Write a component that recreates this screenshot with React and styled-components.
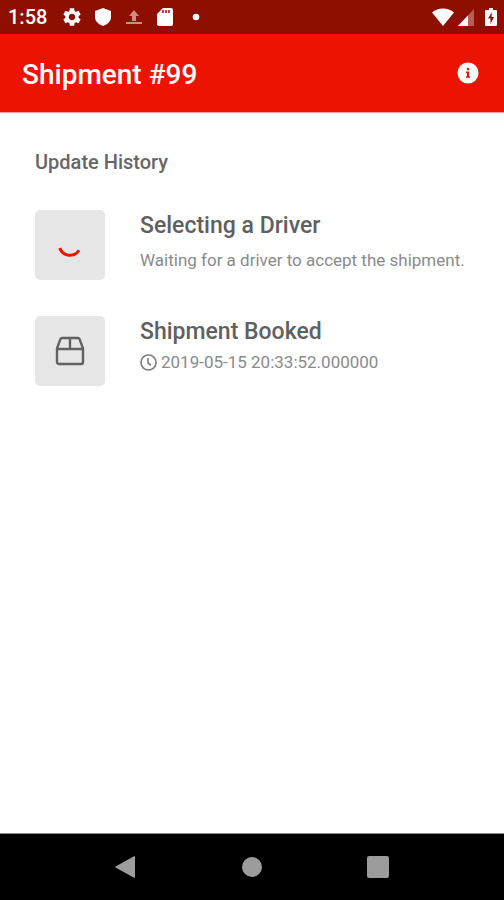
import React from 'react';
import styled, {createGlobalStyle} from 'styled-components';

const GlobalStyle = createGlobalStyle`
  * {
    box-sizing: border-box;
    margin: 0;
    padding: 0;
  }

  body {
    background-color: #fff;
    font-family: Roboto, "Liberation Sans", sans-serif;
  }

  svg {
    display: block;
    flex-shrink: 0;
  }
`;

const Screen = styled.div`
  display: flex;
  flex-direction: column;
  min-height: 100vh;
`;

const StatusBar = styled.div`
  display: flex;
  align-items: center;
  justify-content: space-between;
  height: 34px;
  padding: 0 6px 0 8px;
  background-color: #8e0e00;
  color: #fff;
`;

const Clock = styled.time`
  margin-right: 5px;
  font-size: 20px;
  font-weight: 500;
`;

const StatusGroup = styled.div`
  display: flex;
  align-items: center;
  gap: ${props => props.gap};
`;

const AppBar = styled.header`
  display: flex;
  align-items: center;
  justify-content: space-between;
  height: 79px;
  padding: 0 25px 0 22px;
  border-bottom: 1px solid #f7a79f;
  background-color: #ec1400;
  color: #fff;

  & h1 {
    padding-top: 3px;
    font-size: 28px;
    font-weight: 500;
  }
`;

const InfoButton = styled.button`
  padding: 0;
  border: none;
  background: none;
  color: inherit;
  cursor: pointer;
`;

const Content = styled.main`
  flex: 1;
  padding: 36px 35px;

  & h2 {
    margin-bottom: 34px;
    color: #666;
    font-size: 20px;
    font-weight: 500;
    line-height: 27px;
  }
`;

const History = styled.ul`
  display: flex;
  flex-direction: column;
  gap: 36px;
  list-style: none;
`;

const HistoryItem = styled.li`
  display: flex;
  gap: 35px;

  & h3 {
    color: #606060;
    font-size: 23px;
    font-weight: 500;
    line-height: 32px;
  }
`;

const Tile = styled.div`
  display: flex;
  flex-shrink: 0;
  align-items: center;
  justify-content: center;
  width: 70px;
  height: 70px;
  border-radius: 5px;
  background-color: #e6e6e6;
`;

const Detail = styled.p`
  display: flex;
  align-items: center;
  gap: 4px;
  margin-top: ${props => props.$spaced ? '4px' : '0'};
  color: #8a8a8a;
  font-size: 17px;
  line-height: 28px;
  white-space: nowrap;
`;

const NavBar = styled.nav`
  display: flex;
  justify-content: center;
  height: 67px;
  border-top: 1px solid #8c8c8c;
  background-color: #000;
`;

const NavButton = styled.button`
  display: flex;
  align-items: center;
  justify-content: center;
  width: 25%;
  border: none;
  background: none;
  color: #9c9c9c;
  cursor: pointer;
`;

const GearIcon = () => (
    <svg width="22" height="22" viewBox="0 0 24 24" fill="currentColor">
        <path d="M19.14 12.94c.04-.3.06-.61.06-.94 0-.32-.02-.64-.07-.94l2.03-1.58c.18-.14.23-.41.12-.61l-1.92-3.32c-.12-.22-.37-.29-.59-.22l-2.39.96c-.5-.38-1.03-.7-1.62-.94l-.36-2.54c-.04-.24-.24-.41-.48-.41h-3.84c-.24 0-.43.17-.47.41l-.36 2.54c-.59.24-1.13.57-1.62.94l-2.39-.96c-.22-.08-.47 0-.59.22L2.74 8.87c-.12.21-.08.47.12.61l2.03 1.58c-.05.3-.09.63-.09.94s.02.64.07.94l-2.03 1.58c-.18.14-.23.41-.12.61l1.92 3.32c.12.22.37.29.59.22l2.39-.96c.5.38 1.03.7 1.62.94l.36 2.54c.05.24.24.41.48.41h3.84c.24 0 .44-.17.47-.41l.36-2.54c.59-.24 1.13-.56 1.62-.94l2.39.96c.22.08.47 0 .59-.22l1.92-3.32c.12-.22.07-.47-.12-.61l-2.01-1.58zM12 15.6c-1.98 0-3.6-1.62-3.6-3.6s1.62-3.6 3.6-3.6 3.6 1.62 3.6 3.6-1.62 3.6-3.6 3.6z"/>
    </svg>
);

const ShieldIcon = () => (
    <svg width="22" height="22" viewBox="0 0 22 22" fill="currentColor">
        <path d="M11 2l8 3v6c0 4-3.300 7.500-8 9-4.700-1.500-8-5-8-9V5z"/>
    </svg>
);

const UploadIcon = () => (
    <svg width="22" height="22" viewBox="0 0 22 22" fill="#cf8c84">
        <path d="M11 4l5 6h-3v5H9v-5H6zM3 16h16v2H3z"/>
    </svg>
);

const SdCardIcon = () => (
    <svg width="22" height="22" viewBox="0 0 22 22">
        <path fill="currentColor" d="M9 2h8a2 2 0 0 1 2 2v14a2 2 0 0 1-2 2H5a2 2 0 0 1-2-2V8z"/>
        <path fill="#a8493f" d="M8 4h2v3H8zM11 4h2v3h-2zM14 4h2v3h-2z"/>
    </svg>
);

const DotIcon = () => (
    <svg width="22" height="22" viewBox="0 0 22 22" fill="currentColor">
        <circle cx="11" cy="11" r="3.300"/>
    </svg>
);

const WifiIcon = () => (
    <svg width="24" height="20" viewBox="0 0 24 20" fill="currentColor">
        <path d="M12 19L1 5.500C4 2.800 8 1.500 12 1.500S20 2.800 23 5.500z"/>
    </svg>
);

const SignalIcon = () => (
    <svg width="18" height="20" viewBox="0 0 18 20">
        <path fill="#b65e55" d="M17 2v17H1z"/>
        <path fill="currentColor" d="M11 8.400V19H1z"/>
    </svg>
);

const BatteryIcon = () => (
    <svg width="14" height="20" viewBox="0 0 14 20">
        <path fill="currentColor" d="M5 1h4v2h3a1 1 0 0 1 1 1v14a1 1 0 0 1-1 1H2a1 1 0 0 1-1-1V4a1 1 0 0 1 1-1h3z"/>
        <path fill="#8e0e00" d="M8 5l-4 6.500h2.500V17L10 10H7.500z"/>
    </svg>
);

const InfoIcon = () => (
    <svg width="22" height="22" viewBox="0 0 22 22">
        <circle cx="11" cy="11" r="10.500" fill="currentColor"/>
        <path fill="#ec1400" d="M9.900 6h2.200v2.200H9.900zM9 9.500h3.100v4.700h.9v1.600H9v-1.600h.9V11H9z"/>
    </svg>
);

const SpinnerIcon = () => (
    <svg width="24" height="24" viewBox="0 0 24 24" fill="none" stroke="#ee1400" strokeWidth="3">
        <path d="M1.700 15a10.800 10.800 0 0 0 19.300 2.300"/>
    </svg>
);

const BoxIcon = () => (
    <svg width="30" height="30" viewBox="0 0 30 30" fill="none" stroke="#626262" strokeWidth="2.400" strokeLinejoin="round">
        <path d="M2 12.500l3.300-9.200A2 2 0 0 1 7.200 2h15.600a2 2 0 0 1 1.900 1.300L28 12.500V26a2 2 0 0 1-2 2H4a2 2 0 0 1-2-2z"/>
        <path d="M2 13h26M15 2v11"/>
    </svg>
);

const ClockIcon = () => (
    <svg width="17" height="17" viewBox="0 0 17 17" fill="none" stroke="#808080" strokeWidth="1.700">
        <circle cx="8.500" cy="8.500" r="7.500"/>
        <path d="M8 4v5l3 2.200"/>
    </svg>
);

const history = [
    {
        id: 2,
        title: 'Selecting a Driver',
        icon: <SpinnerIcon/>,
        text: 'Waiting for a driver to accept the shipment.',
    },
    {
        id: 1,
        title: 'Shipment Booked',
        icon: <BoxIcon/>,
        date: '2019-05-15 20:33:52.000000',
    },
];

const App = () => {
    return (
        <>
            <GlobalStyle/>
            <Screen>
                <StatusBar>
                    <StatusGroup gap="9px">
                        <Clock>1:58</Clock>
                        <GearIcon/>
                        <ShieldIcon/>
                        <UploadIcon/>
                        <SdCardIcon/>
                        <DotIcon/>
                    </StatusGroup>
                    <StatusGroup gap="9px">
                        <StatusGroup gap="2px">
                            <WifiIcon/>
                            <SignalIcon/>
                        </StatusGroup>
                        <BatteryIcon/>
                    </StatusGroup>
                </StatusBar>
                <AppBar>
                    <h1>Shipment #99</h1>
                    <InfoButton aria-label="Shipment info">
                        <InfoIcon/>
                    </InfoButton>
                </AppBar>
                <Content>
                    <h2>Update History</h2>
                    <History>
                        {history.map(item => (
                            <HistoryItem key={item.id}>
                                <Tile>{item.icon}</Tile>
                                <div>
                                    <h3>{item.title}</h3>
                                    {item.date
                                        ? <Detail><ClockIcon/><time>{item.date}</time></Detail>
                                        : <Detail $spaced>{item.text}</Detail>}
                                </div>
                            </HistoryItem>
                        ))}
                    </History>
                </Content>
                <NavBar>
                    <NavButton aria-label="Back">
                        <svg width="24" height="24" viewBox="0 0 24 24" fill="currentColor">
                            <path d="M21 1.500v21a1 1 0 0 1-1 .300L1.500 12.500a.6.600 0 0 1 0-1L20 1.200a1 1 0 0 1 1 .300z"/>
                        </svg>
                    </NavButton>
                    <NavButton aria-label="Home">
                        <svg width="22" height="22" viewBox="0 0 22 22" fill="currentColor">
                            <circle cx="11" cy="11" r="10"/>
                        </svg>
                    </NavButton>
                    <NavButton aria-label="Recent apps">
                        <svg width="22" height="22" viewBox="0 0 22 22" fill="currentColor">
                            <rect width="22" height="22" rx="2"/>
                        </svg>
                    </NavButton>
                </NavBar>
            </Screen>
        </>
    );
};

export default App;
